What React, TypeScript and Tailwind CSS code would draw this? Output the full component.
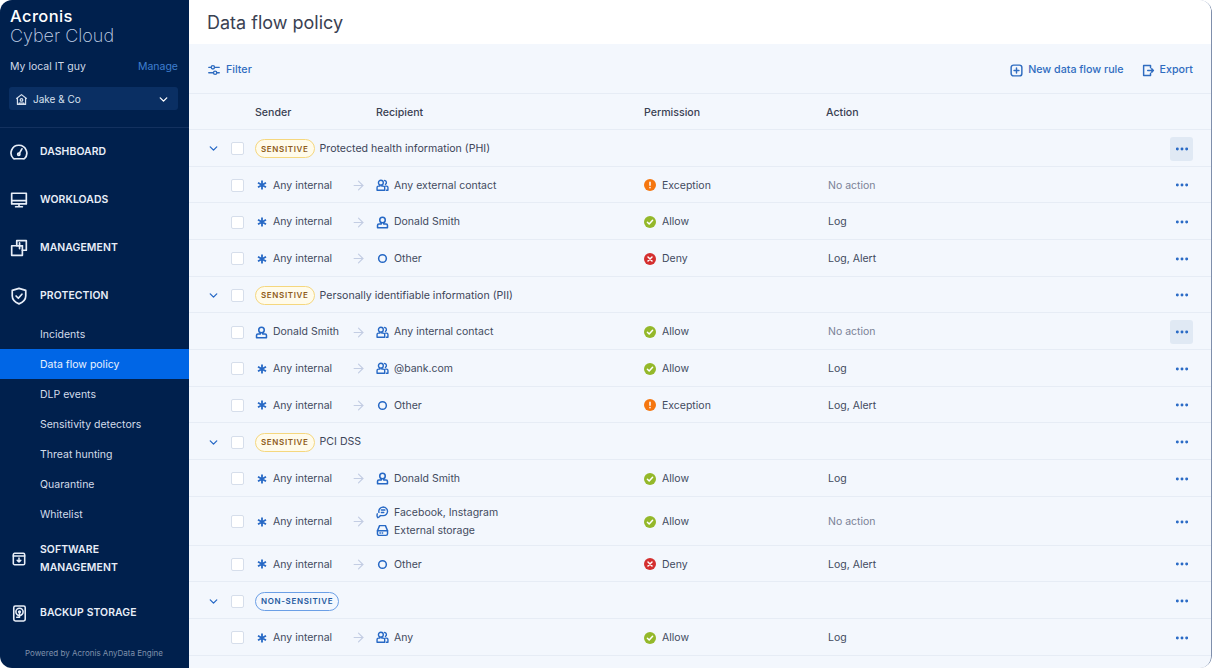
import { ChevronDown, Ellipsis, ArrowRight } from 'lucide-react';
import type { ReactNode } from 'react';

function Svg({ size = 13, sw = 1.9, children }: { size?: number; sw?: number; children: ReactNode }) {
  return (
    <svg className="shrink-0" width={size} height={size} viewBox="0 0 16 16" fill="none" stroke="currentColor" strokeWidth={sw} strokeLinecap="round" strokeLinejoin="round">
      {children}
    </svg>
  );
}

const UserIcon = () => (
  <Svg>
    <circle cx="8" cy="5" r="3.4" />
    <path d="M6.5 8.4v1.4H3.5A1.6 1.6 0 0 0 1.9 11.4v3h12.2v-3a1.6 1.6 0 0 0-1.6-1.6h-3V8.4" />
  </Svg>
);
const UsersIcon = () => (
  <Svg sw={1.7}>
    <circle cx="6" cy="4.6" r="3" />
    <path d="M10.6 1.8a2.6 2.6 0 0 1 1 4.8" />
    <path d="M4.8 7.6v1.2H3a1.7 1.7 0 0 0-1.7 1.7v3.3h9.4v-3.3A1.7 1.7 0 0 0 9 8.8H7.2V7.6" />
    <path d="M11.4 8.8h1.6a1.7 1.7 0 0 1 1.7 1.7v3.3h-2" />
  </Svg>
);
const ChatIcon = () => (
  <Svg sw={1.7}>
    <path d="M8.8 1.4a5.2 5.2 0 0 1 5.4 5.4 5.2 5.2 0 0 1-5.4 5H5.4" />
    <path d="M3.6 7.8a5.2 5.2 0 0 1 5.2-6.4" />
    <path d="M6.6 5h4.4M6.6 8h3" />
    <path d="M1.6 9.6c-.6 1.8-.4 3.6.8 4.8 1.4-.4 2.4-1.2 3-2.6" />
  </Svg>
);
const DriveIcon = () => (
  <Svg sw={1.8}>
    <path d="M4.4 2h7.2l2.6 6.4V12a2 2 0 0 1-2 2H3.8a2 2 0 0 1-2-2V8.4z" />
    <path d="M1.8 8.4h12.4" />
    <path d="M4.8 11.2h.6M7.6 11.2h.6" />
  </Svg>
);
const ExportIcon = () => (
  <Svg sw={1.8}>
    <path d="M10.5 4.5V1.8H2v12.4h8.5v-2.7" />
    <path d="M7 8h7M12 6l2 2-2 2" />
  </Svg>
);
const OtherIcon = () => (
  <Svg size={11} sw={2.2}>
    <circle cx="8" cy="8" r="5.6" />
  </Svg>
);
const AsteriskIcon = () => (
  <svg className="shrink-0" width="10" height="10" viewBox="0 0 10 10" fill="none" stroke="currentColor" strokeWidth="1.8">
    <path d="M5 .4v9.2M1 2.7l8 4.6M9 2.7 1 7.3" />
  </svg>
);
const FilterIcon = () => (
  <Svg size={12} sw={1.8}>
    <path d="M1 4.4h3M9 4.4h6M1 11.6h6M12 11.6h3" />
    <circle cx="6.5" cy="4.4" r="2.2" />
    <circle cx="9.5" cy="11.6" r="2.2" />
  </Svg>
);
const PlusBoxIcon = () => (
  <Svg size={13} sw={1.8}>
    <rect x="1.4" y="1.4" width="13.2" height="13.2" rx="3" />
    <path d="M8 5v6M5 8h6" />
  </Svg>
);

function Status({ kind }: { kind: string }) {
  const bg = kind === 'Allow' ? 'bg-[#94b82a]' : kind === 'Deny' ? 'bg-[#d42f2f]' : 'bg-[#f5760f]';
  return (
    <span className={`w-3 h-3 rounded-full ${bg} flex items-center justify-center text-white`}>
      <svg width="8" height="8" viewBox="0 0 8 8" fill="none" stroke="currentColor" strokeWidth="1.5" strokeLinecap="round" strokeLinejoin="round">
        {kind === 'Allow' && <path d="M1.4 4.2 3.2 6l3.4-3.8" />}
        {kind === 'Deny' && <path d="M2 2l4 4M6 2 2 6" />}
        {kind === 'Exception' && <path d="M4 1.2v3M4 6.6v.1" />}
      </svg>
    </span>
  );
}

function Check() {
  return <span className="w-[13px] h-[13px] rounded-[2px] bg-white border border-[#d6deeb] shrink-0" />;
}

function Dots({ active }: { active?: boolean }) {
  return (
    <span className={`w-[23px] h-6 rounded-[3px] flex items-center justify-center text-[#2668c5] ${active ? 'bg-[#e0e9f4]' : ''}`}>
      <Ellipsis size={16} strokeWidth={2.4} />
    </span>
  );
}

function GroupRow({ badge, title, active }: { badge: string; title?: string; active?: boolean }) {
  const sensitive = badge === 'SENSITIVE';
  return (
    <div className="h-[36.67px] flex items-center border-b border-[#e6ecf5] pr-[18px] pt-[2px]">
      <span className="w-[42px] pl-[18px] text-[#2668c5]">
        <ChevronDown size={13} strokeWidth={2.4} />
      </span>
      <Check />
      <span
        className={`ml-[11px] h-[19px] px-[5px] rounded-full border flex items-center text-[8px] font-semibold tracking-[0.65px] ${
          sensitive ? 'border-[#f5d77e] bg-[#fffbeb] text-[#8f5c1c]' : 'border-[#6b9fe6] bg-[#f3f7fe] text-[#24599f]'
        }`}
      >
        {badge}
      </span>
      {title && <span className="ml-[5px] text-[10.6px] text-[#3d4559]">{title}</span>}
      <span className="ml-auto">
        <Dots active={active} />
      </span>
    </div>
  );
}

function Row({ row }: { row: RowData }) {
  const tall = row.to.length > 1;
  return (
    <div className={`flex items-center border-b border-[#e6ecf5] pr-[18px] pt-[2px] text-[10.5px] text-[#424a5d] ${tall ? 'h-[49px]' : 'h-[36.67px]'}`}>
      <span className="w-[42px]" />
      <Check />
      <span className="ml-[11px] w-[90px] flex items-center gap-[5px]">
        <span className="w-[13px] flex justify-center text-[#2668c5]">
          {row.from === 'Any internal' ? <AsteriskIcon /> : <UserIcon />}
        </span>
        <span className="whitespace-nowrap">{row.from}</span>
      </span>
      <span className="w-[26px] flex justify-center text-[#c3cde3]">
        <ArrowRight size={15} strokeWidth={1.8} />
      </span>
      <span className="ml-[5px] w-[268px] flex flex-col gap-[2px]">
        {row.to.map((t) => (
          <span key={t.label} className="flex items-center gap-[6px] h-4">
            <span className="w-3 flex justify-center text-[#2668c5]">{t.icon}</span>
            <span>{t.label}</span>
          </span>
        ))}
      </span>
      <span className="w-[184px] flex items-center gap-[6px]">
        <Status kind={row.perm} />
        {row.perm}
      </span>
      <span className={row.action === 'No action' ? 'text-[#7a8296]' : ''}>{row.action}</span>
      <span className="ml-auto">
        <Dots active={row.active} />
      </span>
    </div>
  );
}

type Recipient = { label: string; icon: ReactNode };
type RowData = { from: string; to: Recipient[]; perm: string; action: string; active?: boolean };

const other = { label: 'Other', icon: <OtherIcon /> };
const donald = { label: 'Donald Smith', icon: <UserIcon /> };

const groups: { badge: string; title?: string; active?: boolean; rows: RowData[] }[] = [
  {
    badge: 'SENSITIVE',
    title: 'Protected health information (PHI)',
    active: true,
    rows: [
      { from: 'Any internal', to: [{ label: 'Any external contact', icon: <UsersIcon /> }], perm: 'Exception', action: 'No action' },
      { from: 'Any internal', to: [donald], perm: 'Allow', action: 'Log' },
      { from: 'Any internal', to: [other], perm: 'Deny', action: 'Log, Alert' },
    ],
  },
  {
    badge: 'SENSITIVE',
    title: 'Personally identifiable information (PII)',
    rows: [
      { from: 'Donald Smith', to: [{ label: 'Any internal contact', icon: <UsersIcon /> }], perm: 'Allow', action: 'No action', active: true },
      { from: 'Any internal', to: [{ label: '@bank.com', icon: <UsersIcon /> }], perm: 'Allow', action: 'Log' },
      { from: 'Any internal', to: [other], perm: 'Exception', action: 'Log, Alert' },
    ],
  },
  {
    badge: 'SENSITIVE',
    title: 'PCI DSS',
    rows: [
      { from: 'Any internal', to: [donald], perm: 'Allow', action: 'Log' },
      {
        from: 'Any internal',
        to: [
          { label: 'Facebook, Instagram', icon: <ChatIcon /> },
          { label: 'External storage', icon: <DriveIcon /> },
        ],
        perm: 'Allow',
        action: 'No action',
      },
      { from: 'Any internal', to: [other], perm: 'Deny', action: 'Log, Alert' },
    ],
  },
  {
    badge: 'NON-SENSITIVE',
    rows: [{ from: 'Any internal', to: [{ label: 'Any', icon: <UsersIcon /> }], perm: 'Allow', action: 'Log' }],
  },
];

function NavItem({ icon, children, h = 'h-12' }: { icon: ReactNode; children: ReactNode; h?: string }) {
  return (
    <div className={`${h} flex items-center pl-[10px] pt-[2px] text-[#e8eef8]`}>
      <span className="w-[30px] flex items-center">{icon}</span>
      <span className="text-[10.4px] font-semibold tracking-[0.1px] leading-[18px]">{children}</span>
    </div>
  );
}

const subItems = ['Incidents', 'Data flow policy', 'DLP events', 'Sensitivity detectors', 'Threat hunting', 'Quarantine', 'Whitelist'];

function Sidebar() {
  return (
    <aside className="w-[189px] shrink-0 bg-[#00204d] flex flex-col">
      <div className="pl-[10px] pt-[7px] h-[58px] text-white">
        <div className="text-[16.5px] leading-[18px] font-medium tracking-[0.4px]">Acronis</div>
        <div className="text-[18px] leading-[20px] mt-[1px] font-extralight text-[#c5d4ea]">Cyber Cloud</div>
      </div>
      <div className="flex justify-between items-center pl-[10px] pr-[11px] h-[18px] text-[10.5px]">
        <span className="text-[#cfd9e8]">My local IT guy</span>
        <span className="text-[#3f7fd0]">Manage</span>
      </div>
      <div className="ml-[9px] w-[169px] mt-[11px] h-[23px] pt-[1px] rounded-[3px] bg-[#0a2f63] flex items-center pl-[6px] pr-2 text-[10px] text-[#d6e0ee]">
        <svg width="13" height="13" viewBox="0 0 16 16" fill="none" stroke="currentColor" strokeWidth="1.5" strokeLinejoin="round">
          <path d="M1.5 7 8 2l6.5 5M3 6v8h10V6" />
          <circle cx="8" cy="8.5" r="1.6" />
          <path d="M5 14v-1.5h6V14" />
        </svg>
        <span className="ml-[5px]">Jake &amp; Co</span>
        <ChevronDown size={13} strokeWidth={2.5} className="ml-auto text-white" />
      </div>
      <div className="mt-[17px] border-t border-[#13315f]">
        <div className="-mt-px">
          <NavItem
            icon={
              <Svg size={18} sw={1.5}>
                <path d="M4 14H3.2A6.9 6.9 0 0 1 8 2a7 7 0 0 1 4.8 12H12" />
                <path d="M4.5 14h7M8.2 9.4 10.6 5.2" />
                <circle cx="7.8" cy="10" r="1" />
              </Svg>
            }
          >
            DASHBOARD
          </NavItem>
          <NavItem
            icon={
              <Svg size={18} sw={1.5}>
                <path d="M1.5 2h13v9.5h-13zM1.5 8.5h13M8 11.5v2.5M5 14h6" />
              </Svg>
            }
          >
            WORKLOADS
          </NavItem>
          <NavItem
            icon={
              <Svg size={18} sw={1.5}>
                <path d="M6 5V1.5h8.5V10H11" />
                <path d="M1.5 6H11v8.5H1.5z" />
                <path d="M8.5 3.5v5M6 6h5" />
              </Svg>
            }
          >
            MANAGEMENT
          </NavItem>
          <NavItem
            icon={
              <Svg size={18} sw={1.5}>
                <path d="M8 1.2 14 3v5c0 3.4-2.6 5.6-6 7-3.4-1.4-6-3.6-6-7V3z" />
                <path d="m5.4 8 2 2 3.2-3.6" />
              </Svg>
            }
          >
            PROTECTION
          </NavItem>
        </div>
        <div>
          {subItems.map((s) => (
            <div
              key={s}
              className={`h-[30px] flex items-center pl-10 pt-[2px] text-[10.5px] ${
                s === 'Data flow policy' ? 'bg-[#0066e6] text-[#eaf2ff]' : 'text-[#d3dcea]'
              }`}
            >
              {s}
            </div>
          ))}
        </div>
        <NavItem
          h="h-[58px]"
          icon={
            <span className="pl-[2px]">
              <Svg size={14} sw={1.8}>
                <rect x="1.5" y="1.5" width="13" height="13" rx="1.5" />
                <path d="M1.5 4.5h13M8 7v4.4M6 9.6l2 1.8 2-1.8" />
              </Svg>
            </span>
          }
        >
          SOFTWARE
          <br />
          MANAGEMENT
        </NavItem>
        <NavItem
          h="h-[50px]"
          icon={
            <span className="pl-[1px]">
              <Svg size={17} sw={1.5}>
                <rect x="2.6" y="1" width="10.8" height="14" rx="1.5" />
                <circle cx="8" cy="6.4" r="3.4" />
                <circle cx="8" cy="6.4" r=".8" />
                <path d="M8 8v3.6H5.4" />
              </Svg>
            </span>
          }
        >
          BACKUP STORAGE
        </NavItem>
      </div>
      <div className="mt-auto h-[30px] flex items-center pl-[25px] text-[8px] text-[#7f90ab]">Powered by Acronis AnyData Engine</div>
    </aside>
  );
}

export default function App() {
  return (
    <div className="w-[1212px] h-[668px] overflow-hidden flex bg-white rounded-[12px] font-['Inter',sans-serif]">
      <Sidebar />
      <main className="flex-1 min-w-0 flex flex-col bg-[#f3f7fd] border-r border-[#7f8fac] rounded-r-[12px]">
        <div className="h-11 shrink-0 bg-white rounded-tr-[12px] flex items-center pl-[18px] text-[18px] text-[#3a4152]">Data flow policy</div>
        <div className="h-[50px] shrink-0 flex items-center pl-[19px] pr-[18px] pt-[3px] border-b border-[#e6ecf5] text-[10.7px] font-medium text-[#2f6cc0]">
          <FilterIcon />
          <span className="ml-[6px]">Filter</span>
          <span className="ml-auto">
            <PlusBoxIcon />
          </span>
          <span className="ml-[5px]">New data flow rule</span>
          <span className="ml-[18px]">
            <ExportIcon />
          </span>
          <span className="ml-[5px]">Export</span>
        </div>
        <div className="h-9 shrink-0 flex items-center pt-[2px] border-b border-[#e6ecf5] text-[10.6px] font-medium text-[#3a4152]">
          <span className="ml-[66px] w-[121px]">Sender</span>
          <span className="w-[268px]">Recipient</span>
          <span className="w-[182px]">Permission</span>
          <span>Action</span>
        </div>
        {groups.map((g) => (
          <div key={g.badge + g.title}>
            <GroupRow badge={g.badge} title={g.title} active={g.active} />
            {g.rows.map((r, i) => (
              <Row key={i} row={r} />
            ))}
          </div>
        ))}
      </main>
    </div>
  );
}
